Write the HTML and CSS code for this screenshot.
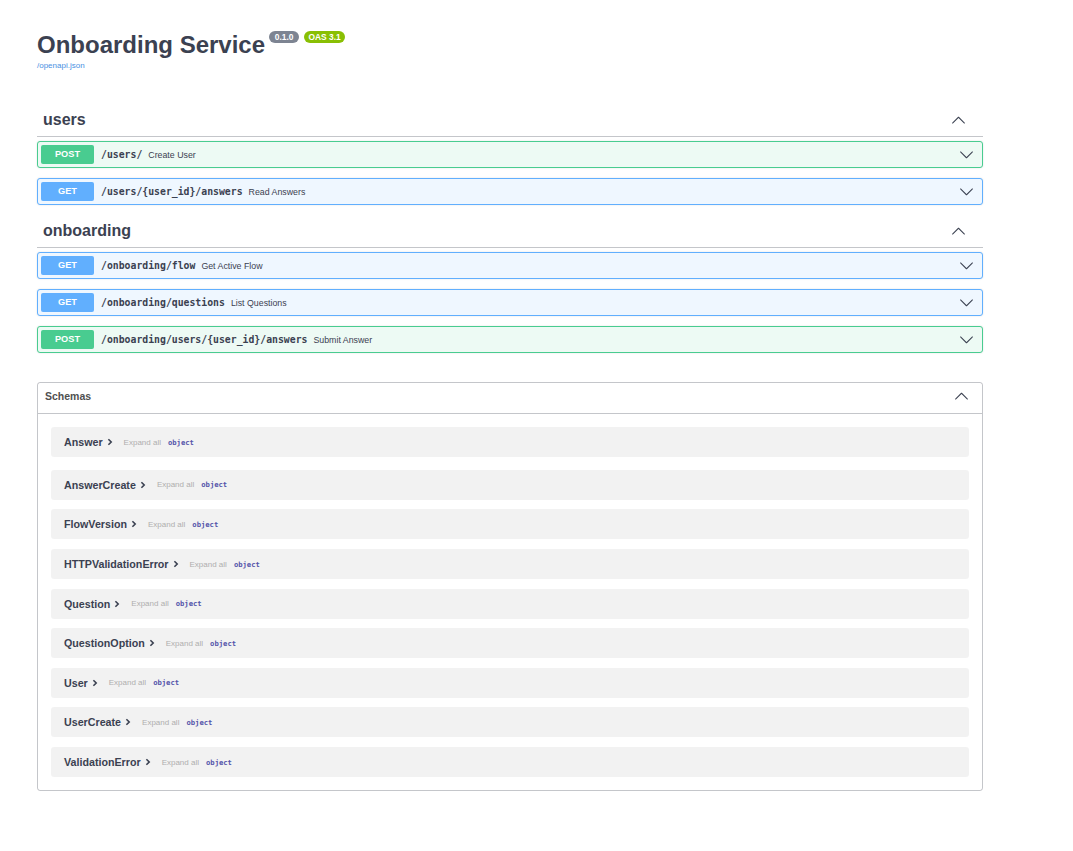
FILE: index.html
```html
<!DOCTYPE html>
<html lang="en">
<head>
<meta charset="utf-8">
<title>Onboarding Service - Swagger UI</title>
<link rel="stylesheet" href="styles.css">
</head>
<body>
<div class="wrapper">
  <div class="info">
    <div class="title-row">
      <h2 class="title">Onboarding Service</h2>
      <span class="badge badge-version">0.1.0</span>
      <span class="badge badge-oas">OAS 3.1</span>
    </div>
    <a class="spec-link" href="#">/openapi.json</a>
  </div>

  <section class="tag-section">
    <div class="tag-header">
      <h3 class="tag-name">users</h3>
      <svg class="chev chev-up" viewBox="0 0 20 20"><path d="M17.418 6.109c.272-.268.709-.268.979 0s.271.701 0 .969l-7.908 7.83c-.27.268-.707.268-.979 0l-7.908-7.83c-.27-.268-.27-.701 0-.969.271-.268.709-.268.979 0L10 13.25l7.418-7.141z"/></svg>
    </div>
    <div class="ops">
      <div class="op op-post">
        <span class="method">POST</span>
        <span class="path">/users/</span>
        <span class="summary">Create User</span>
        <svg class="chev chev-down" viewBox="0 0 20 20"><path d="M17.418 6.109c.272-.268.709-.268.979 0s.271.701 0 .969l-7.908 7.83c-.27.268-.707.268-.979 0l-7.908-7.83c-.27-.268-.27-.701 0-.969.271-.268.709-.268.979 0L10 13.25l7.418-7.141z"/></svg>
      </div>
      <div class="op op-get">
        <span class="method">GET</span>
        <span class="path">/users/{user_id}/answers</span>
        <span class="summary">Read Answers</span>
        <svg class="chev chev-down" viewBox="0 0 20 20"><path d="M17.418 6.109c.272-.268.709-.268.979 0s.271.701 0 .969l-7.908 7.83c-.27.268-.707.268-.979 0l-7.908-7.83c-.27-.268-.27-.701 0-.969.271-.268.709-.268.979 0L10 13.25l7.418-7.141z"/></svg>
      </div>
    </div>
  </section>

  <section class="tag-section">
    <div class="tag-header">
      <h3 class="tag-name">onboarding</h3>
      <svg class="chev chev-up" viewBox="0 0 20 20"><path d="M17.418 6.109c.272-.268.709-.268.979 0s.271.701 0 .969l-7.908 7.83c-.27.268-.707.268-.979 0l-7.908-7.83c-.27-.268-.27-.701 0-.969.271-.268.709-.268.979 0L10 13.25l7.418-7.141z"/></svg>
    </div>
    <div class="ops">
      <div class="op op-get">
        <span class="method">GET</span>
        <span class="path">/onboarding/flow</span>
        <span class="summary">Get Active Flow</span>
        <svg class="chev chev-down" viewBox="0 0 20 20"><path d="M17.418 6.109c.272-.268.709-.268.979 0s.271.701 0 .969l-7.908 7.83c-.27.268-.707.268-.979 0l-7.908-7.83c-.27-.268-.27-.701 0-.969.271-.268.709-.268.979 0L10 13.25l7.418-7.141z"/></svg>
      </div>
      <div class="op op-get">
        <span class="method">GET</span>
        <span class="path">/onboarding/questions</span>
        <span class="summary">List Questions</span>
        <svg class="chev chev-down" viewBox="0 0 20 20"><path d="M17.418 6.109c.272-.268.709-.268.979 0s.271.701 0 .969l-7.908 7.83c-.27.268-.707.268-.979 0l-7.908-7.83c-.27-.268-.27-.701 0-.969.271-.268.709-.268.979 0L10 13.25l7.418-7.141z"/></svg>
      </div>
      <div class="op op-post">
        <span class="method">POST</span>
        <span class="path">/onboarding/users/{user_id}/answers</span>
        <span class="summary">Submit Answer</span>
        <svg class="chev chev-down" viewBox="0 0 20 20"><path d="M17.418 6.109c.272-.268.709-.268.979 0s.271.701 0 .969l-7.908 7.83c-.27.268-.707.268-.979 0l-7.908-7.83c-.27-.268-.27-.701 0-.969.271-.268.709-.268.979 0L10 13.25l7.418-7.141z"/></svg>
      </div>
    </div>
  </section>

  <section class="models">
    <div class="models-header">
      <h4 class="models-title">Schemas</h4>
      <svg class="chev chev-up" viewBox="0 0 20 20"><path d="M17.418 6.109c.272-.268.709-.268.979 0s.271.701 0 .969l-7.908 7.83c-.27.268-.707.268-.979 0l-7.908-7.83c-.27-.268-.27-.701 0-.969.271-.268.709-.268.979 0L10 13.25l7.418-7.141z"/></svg>
    </div>
    <div class="models-body">
      <div class="model"><span class="model-name">Answer</span><svg class="chev-right" viewBox="0 0 10 10"><path d="M3 1.5 L6.5 5 L3 8.5"/></svg><span class="expand">Expand all</span><span class="type">object</span></div>
      <div class="model"><span class="model-name">AnswerCreate</span><svg class="chev-right" viewBox="0 0 10 10"><path d="M3 1.5 L6.5 5 L3 8.5"/></svg><span class="expand">Expand all</span><span class="type">object</span></div>
      <div class="model"><span class="model-name">FlowVersion</span><svg class="chev-right" viewBox="0 0 10 10"><path d="M3 1.5 L6.5 5 L3 8.5"/></svg><span class="expand">Expand all</span><span class="type">object</span></div>
      <div class="model"><span class="model-name">HTTPValidationError</span><svg class="chev-right" viewBox="0 0 10 10"><path d="M3 1.5 L6.5 5 L3 8.5"/></svg><span class="expand">Expand all</span><span class="type">object</span></div>
      <div class="model"><span class="model-name">Question</span><svg class="chev-right" viewBox="0 0 10 10"><path d="M3 1.5 L6.5 5 L3 8.5"/></svg><span class="expand">Expand all</span><span class="type">object</span></div>
      <div class="model"><span class="model-name">QuestionOption</span><svg class="chev-right" viewBox="0 0 10 10"><path d="M3 1.5 L6.5 5 L3 8.5"/></svg><span class="expand">Expand all</span><span class="type">object</span></div>
      <div class="model"><span class="model-name">User</span><svg class="chev-right" viewBox="0 0 10 10"><path d="M3 1.5 L6.5 5 L3 8.5"/></svg><span class="expand">Expand all</span><span class="type">object</span></div>
      <div class="model"><span class="model-name">UserCreate</span><svg class="chev-right" viewBox="0 0 10 10"><path d="M3 1.5 L6.5 5 L3 8.5"/></svg><span class="expand">Expand all</span><span class="type">object</span></div>
      <div class="model"><span class="model-name">ValidationError</span><svg class="chev-right" viewBox="0 0 10 10"><path d="M3 1.5 L6.5 5 L3 8.5"/></svg><span class="expand">Expand all</span><span class="type">object</span></div>
    </div>
  </section>
</div>
</body>
</html>
```

FILE: styles.css
```css
html, body {
  margin: 0;
  padding: 0;
  background: #ffffff;
}

body {
  font-family: "Liberation Sans", Arial, sans-serif;
  color: #3b4151;
}

.wrapper {
  width: 946px;
  margin-left: 37px;
  padding-top: 31px;
}

/* ---------- info ---------- */
.title-row {
  display: flex;
  align-items: flex-start;
}

.title {
  margin: 0;
  font-size: 24px;
  line-height: 28px;
  font-weight: bold;
  color: #3b4151;
}

.badge {
  display: inline-block;
  padding: 0 3px;
  height: 12px;
  line-height: 12px;
  border-radius: 6px;
  font-size: 8.4px;
  font-weight: bold;
  color: #ffffff;
  text-align: center;
  font-family: "Liberation Sans", Arial, sans-serif;
}

.badge-version {
  margin-left: 4px;
  width: 24px;
  background: #7d8492;
}

.badge-oas {
  margin-left: 5px;
  width: 35px;
  background: #89bf04;
}

.spec-link {
  display: block;
  margin-top: 2px;
  font-size: 8px;
  line-height: 10px;
  color: #4990e2;
  text-decoration: none;
}

/* ---------- tags ---------- */
.tag-section {
  margin-bottom: 10px;
}

.tag-section:first-of-type {
  margin-top: 33px;
}

.tag-header {
  display: flex;
  align-items: center;
  justify-content: space-between;
  height: 32px;
  padding: 0 17px 0 6px;
  border-bottom: 1px solid rgba(59, 65, 81, 0.3);
}

.tag-name {
  margin: 0;
  font-size: 16px;
  font-weight: bold;
  color: #3b4151;
}

.chev {
  width: 15px;
  height: 15px;
  fill: #3b4151;
}

.chev-up {
  transform: rotate(180deg);
}

.ops {
  display: flex;
  flex-direction: column;
  gap: 10px;
  margin-top: 4px;
}

.op {
  display: flex;
  align-items: center;
  height: 25px;
  padding: 0 8px 0 3px;
  border: 1px solid;
  border-radius: 3px;
  box-shadow: 0 0 2px rgba(0, 0, 0, 0.12);
}

.op-post {
  background: #edfaf4;
  border-color: #49cc90;
}

.op-get {
  background: #eff7ff;
  border-color: #61affe;
}

.method {
  display: inline-block;
  width: 53px;
  height: 19px;
  line-height: 19px;
  border-radius: 2px;
  text-align: center;
  font-size: 9.2px;
  font-weight: bold;
  color: #ffffff;
}

.op-post .method {
  background: #49cc90;
}

.op-get .method {
  background: #61affe;
}

.path {
  margin-left: 7px;
  font-family: "DejaVu Sans Mono", "Liberation Mono", monospace;
  font-size: 9.8px;
  font-weight: bold;
  color: #3b4151;
}

.summary {
  margin-left: 6px;
  font-size: 8.8px;
  color: #3b4151;
  flex: 1;
}

/* ---------- models ---------- */
.models {
  margin-top: 29px;
  border: 1px solid rgba(59, 65, 81, 0.3);
  border-radius: 3px;
}

.models-header {
  display: flex;
  align-items: center;
  justify-content: space-between;
  height: 26px;
  padding: 0 13px 4px 7px;
  border-bottom: 1px solid rgba(59, 65, 81, 0.3);
}

.models-title {
  margin: 0;
  font-size: 10.5px;
  font-weight: bold;
  color: #505050;
}

.models-body {
  display: flex;
  flex-direction: column;
  gap: 9.6px;
  padding: 13px 13px 12.5px;
}

.model {
  display: flex;
  align-items: center;
  height: 30px;
  padding-left: 13px;
  border-radius: 3px;
  background: rgba(0, 0, 0, 0.05);
}

.model:first-child {
  margin-bottom: 3.3px;
}

.model-name {
  font-size: 10.7px;
  font-weight: bold;
  color: #3b4151;
}

.chev-right {
  width: 8px;
  height: 8px;
  margin-left: 3px;
  fill: none;
  stroke: #3b4151;
  stroke-width: 2;
}

.expand {
  margin-left: 10px;
  font-size: 8px;
  color: #afaeae;
}

.type {
  margin-left: 7px;
  font-family: "DejaVu Sans Mono", "Liberation Mono", monospace;
  font-size: 7.2px;
  font-weight: bold;
  color: #55a;
}
```
